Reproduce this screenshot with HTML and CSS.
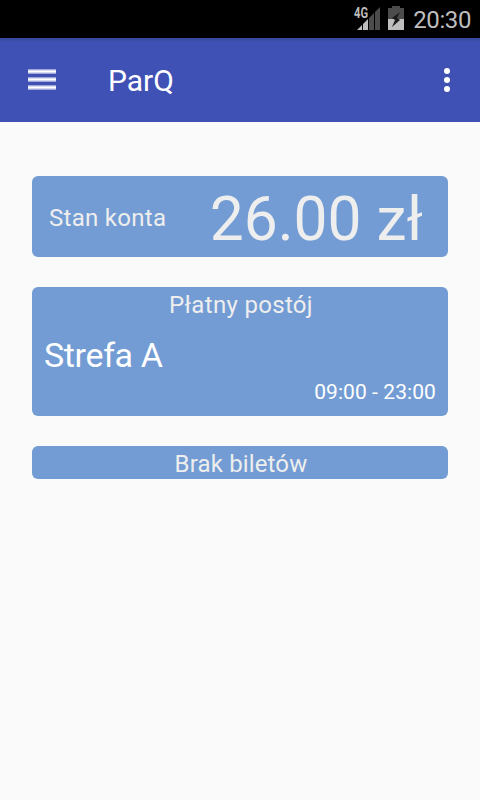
FILE: index.html
```
<!DOCTYPE html>
<html lang="pl">
<head>
<meta charset="utf-8">
<title>ParQ</title>
<link rel="stylesheet" href="styles.css">
</head>
<body>
<div class="status">
  <svg class="signal" width="26" height="24" viewBox="0 0 26 24">
    <path fill="#bebebe" d="M3 24l5-5v5zM9 18l5-5v11H9z"/>
    <path fill="#4c4c4c" d="M15 12l5-5v17h-5zM21 6l5-5v23h-5z"/>
    <text class="network" x="0" y="11.500" textLength="14" lengthAdjust="spacingAndGlyphs">4G</text>
  </svg>
  <svg class="battery" width="16" height="24" viewBox="0 0 16 24">
    <path fill="#4c4c4c" d="M4 0h8v2h4v11H0V2h4z"/>
    <path fill="#bebebe" d="M0 13h16v11H0z"/>
    <path fill="#1c1c1c" d="M12 6 4 12l3 2-3 7 8-7-3-2z"/>
  </svg>
  <span class="clock">20:30</span>
</div>
<header class="appbar">
  <svg class="menu" width="28" height="22" viewBox="0 0 28 22"><path fill="#9fa8da" d="M0 0h28v5H0zM0 8h28v5H0zM0 16h28v5H0z"/><path fill="#d9dcf0" d="M0 1h28v3H0zM0 9h28v3H0zM0 17h28v3H0z"/><path fill="#fff" d="M0 2h28v1H0zM0 10h28v1H0zM0 18h28v1H0z"/></svg>
  <h1 class="title">ParQ</h1>
  <svg class="more" width="6" height="26" viewBox="0 0 6 26" fill="#fff"><circle cx="3" cy="4" r="3"/><circle cx="3" cy="13" r="3"/><circle cx="3" cy="22" r="3"/></svg>
</header>
<main class="content">
  <section class="card balance"><span class="label">Stan konta</span><span class="amount">26.00 zł</span></section>
  <section class="card parking">
    <div class="heading heading-wide">Płatny postój</div>
    <div class="zone">Strefa A</div>
    <div class="hours">09:00 - 23:00</div>
  </section>
  <section class="card tickets"><div class="heading">Brak biletów</div></section>
</main>
</body>
</html>
```
FILE: styles.css
```
* { box-sizing: border-box; }
body { margin: 0; height: 800px; background: #fafafa; font-family: Roboto, sans-serif; color: #fff; overflow: hidden; }
.status { height: 38px; background: #000; display: flex; justify-content: flex-end; align-items: center; padding: 0 9px 2px 0; }
.network { font: 700 14px Roboto, sans-serif; fill: #bebebe; stroke: #000; stroke-width: 2px; paint-order: stroke; }
.battery { margin: 0 9px 0 8px; }
.clock { font-size: 24px; line-height: 28px; letter-spacing: -.4px; color: #bebebe; padding-top: 3px; }
.appbar { height: 84px; background: linear-gradient(#384799, #3f51b5 4px); display: flex; align-items: center; padding: 0 30px 0 28px; }
.title { margin: 2px auto 0 52px; font: 400 30px/36px Roboto, sans-serif; }
.content { padding: 54px 32px; display: flex; flex-direction: column; gap: 30px; }
.card { background: #729cd3; border-radius: 6px; }
.balance { height: 81px; display: flex; align-items: center; justify-content: space-between; padding: 3px 25px 0 17px; }
.label { font-size: 24px; letter-spacing: .3px; color: #eee; }
.amount { font-size: 60.5px; font-weight: 400; line-height: 72px; padding-top: 4px; color: #eee; }
.parking { height: 129px; }
.heading { height: 33px; padding-left: 2px; font-size: 24px; line-height: 37px; letter-spacing: .15px; text-align: center; color: #eee; }
.heading-wide { letter-spacing: .32px; }
.zone { font-size: 34px; line-height: 40px; letter-spacing: -.35px; margin: 15px 12px 0; }
.hours { font-size: 21px; line-height: 25px; letter-spacing: .08px; text-align: right; margin: 5px 12px 0; }
.tickets { height: 33px; }
```
